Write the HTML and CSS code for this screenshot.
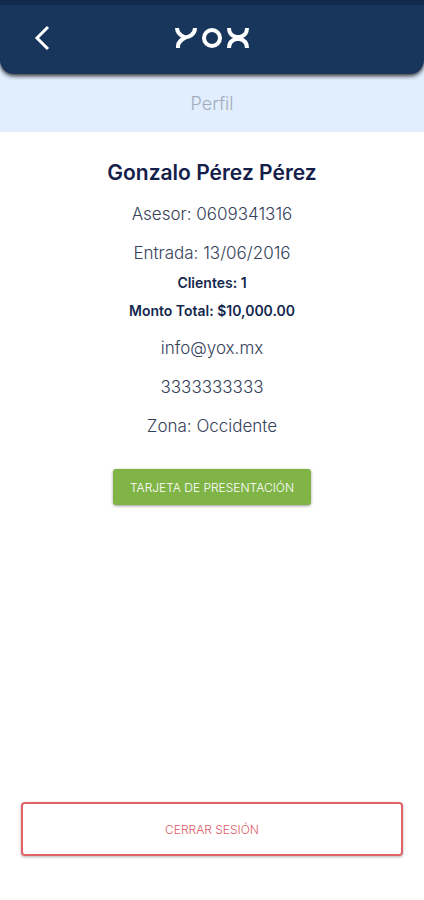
FILE: index.html
```
<!DOCTYPE html>
<html lang="es">
<head>
    <meta charset="UTF-8">
    <meta name="viewport" content="width=device-width, initial-scale=1.0">
    <title>YOX - Perfil</title>
    <link rel="stylesheet" href="styles.css">
</head>
<body>
    <header class="top-bar">
        <button class="back-btn" type="button" aria-label="Regresar">
            <svg width="18" height="28" viewBox="0 0 18 28">
                <path d="M16 3 L5 14 L16 25" fill="none" stroke="#fff" stroke-width="3"/>
            </svg>
        </button>
        <svg class="logo" width="74" height="22" viewBox="0 0 74 22" role="img" aria-label="YOX">
            <g fill="none" stroke="#fff" stroke-width="4">
                <path d="M2 1 C2 5 5 8 9 10 C14 11 20 7 20 1"/>
                <path d="M3 21 V19 C3 15 6 13 11 10"/>
                <circle cx="37" cy="11" r="8"/>
                <path d="M54 1 C54 6 57 9 61 10 H65 C69 9 72 6 72 1"/>
                <path d="M54 21 C54 16 57 13 61 12 H65 C69 13 72 16 72 21"/>
            </g>
        </svg>
    </header>

    <h1 class="page-title">Perfil</h1>

    <main class="profile">
        <h2>Gonzalo Pérez Pérez</h2>
        <p>Asesor: 0609341316</p>
        <div class="summary">
            <p>Entrada: 13/06/2016</p>
            <p class="total">Clientes: 1</p>
            <p class="total">Monto Total: $10,000.00</p>
        </div>
        <p>info@yox.mx</p>
        <p>3333333333</p>
        <p>Zona: Occidente</p>
        <button class="card-btn" type="button">TARJETA DE PRESENTACIÓN</button>
    </main>

    <footer>
        <button class="logout-btn" type="button">CERRAR SESIÓN</button>
    </footer>
</body>
</html>
```
FILE: styles.css
```
* {
    box-sizing: border-box;
}
body {
    margin: 0;
    min-height: 100vh;
    display: flex;
    flex-direction: column;
    font-family: "Century Gothic", Inter, sans-serif;
    background-color: #fff;
}
h1, h2, p {
    margin: 0;
}
button {
    font-family: inherit;
    font-weight: 300;
    cursor: pointer;
}

/* Header */
.top-bar {
    position: relative;
    z-index: 1;
    display: grid;
    grid-template-columns: 1fr auto 1fr;
    align-items: center;
    height: 74px;
    padding: 0 28px 4px;
    border-top: 5px solid #112b4c;
    border-radius: 0 0 14px 14px;
    background-color: #18365b;
    box-shadow: 0 2px 4px rgba(0, 0, 0, 0.8);
}
.back-btn {
    justify-self: start;
    display: flex;
    padding: 0 4px;
    border: none;
    background: none;
}
.page-title {
    margin-top: -16px;
    padding: 33px 0 15px;
    background-color: #e0eefe;
    color: #a3acb8;
    font-size: 18px;
    font-weight: 300;
    line-height: 26px;
    text-align: center;
}

/* Profile data */
.profile {
    flex: 1;
    display: flex;
    flex-direction: column;
    align-items: center;
    gap: 15px;
    padding: 29px 20px;
    color: #35425a;
    font-size: 17px;
    font-weight: 300;
    line-height: 24px;
    text-align: center;
}
.profile h2 {
    margin-bottom: 2px;
    color: #14204a;
    font-size: 21px;
    font-weight: 600;
}
.summary {
    display: flex;
    flex-direction: column;
    gap: 8px;
}
.total {
    color: #14284e;
    font-size: 14px;
    font-weight: 600;
    line-height: 20px;
}
.card-btn {
    height: 36px;
    margin-top: 16px;
    padding: 0 17px;
    border: none;
    border-radius: 3px;
    background-color: #80b447;
    color: #fff;
    font-size: 12px;
    box-shadow: 0 1px 3px rgba(0, 0, 0, 0.4);
}

footer {
    padding: 0 21px 44px;
}
.logout-btn {
    width: 100%;
    height: 54px;
    border: 2px solid #e06368;
    border-radius: 4px;
    background-color: #fff;
    color: #dc5b66;
    font-size: 12px;
    box-shadow: 0 1px 3px rgba(0, 0, 0, 0.3);
}
```
